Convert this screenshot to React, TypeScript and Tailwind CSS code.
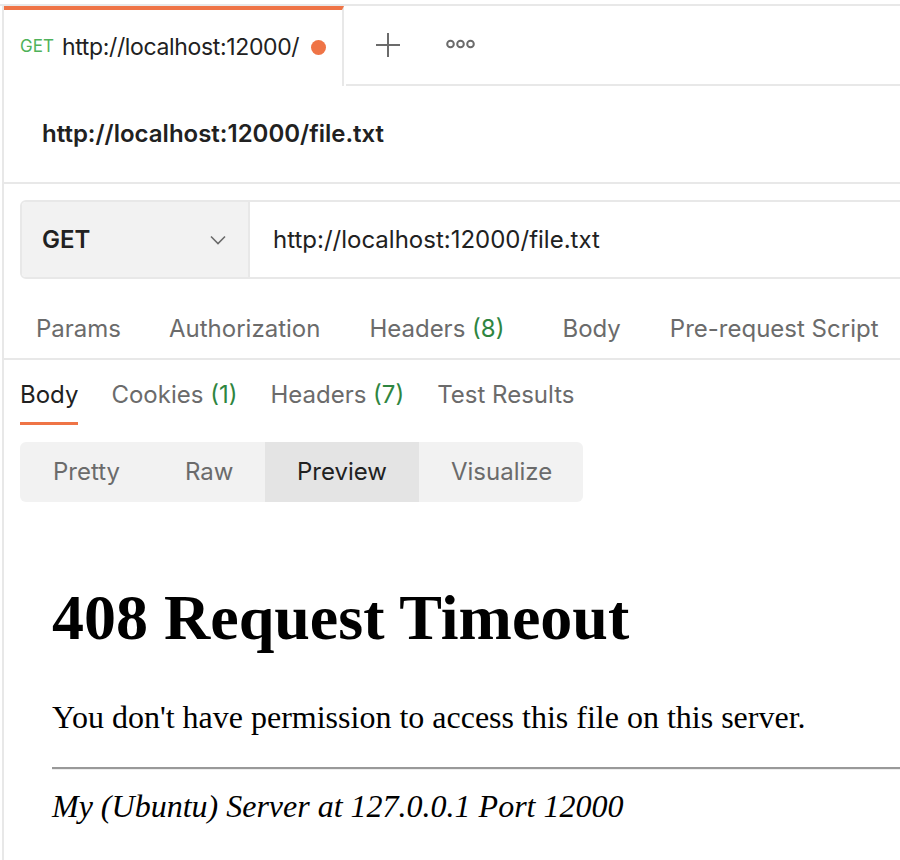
import React from "react";

const ui = { fontFamily: "Inter, 'Noto Sans', sans-serif" };
const serif = { fontFamily: "'Liberation Serif', 'Times New Roman', serif" };

export default function App() {
  return (
    <div className="w-[900px] h-[860px] bg-white overflow-hidden pt-[4px]" style={ui}>
      <div className="border-t-2 border-[#e8e8e8] h-full">
        <div className="ml-[2px] border-l-2 border-[#e8e8e8] h-full flex flex-col">
          {/* Tab bar */}
          <div className="flex h-[80px] shrink-0">
            <div className="w-[340px] border-t-[4px] border-[#ef7446] border-r-2 border-r-[#e8e8e8] flex items-center pl-[16px] pb-[2px]">
              <span className="text-[17px] text-[#4fb25a] mr-[8px]">GET</span>
              <span className="text-[23px] text-[#212121] tracking-[-0.35px]">http://localhost:12000/</span>
              <span className="ml-[12px] w-[15px] h-[15px] rounded-full bg-[#ef7446]"></span>
            </div>
            <div className="flex-1 ml-[2px] border-b-2 border-[#e8e8e8] flex items-center">
              <svg width="26" height="26" viewBox="0 0 26 26" className="ml-[29px] mb-[1px]">
                <path d="M13 1v24M1 13h24" stroke="#6b6b6b" strokeWidth="2" />
              </svg>
              <svg width="30" height="10" viewBox="0 0 30 10" className="ml-[45px] mb-[2px]">
                <circle cx="4.5" cy="5" r="3.3" fill="none" stroke="#6b6b6b" strokeWidth="2" />
                <circle cx="14.5" cy="5" r="3.3" fill="none" stroke="#6b6b6b" strokeWidth="2" />
                <circle cx="24.5" cy="5" r="3.3" fill="none" stroke="#6b6b6b" strokeWidth="2" />
              </svg>
            </div>
          </div>
          {/* Request name header */}
          <div className="h-[98px] shrink-0 border-b-2 border-[#e8e8e8] flex items-center pl-[38px]">
            <span className="text-[24px] font-semibold text-[#212121]">http://localhost:12000/file.txt</span>
          </div>
          {/* URL bar */}
          <div className="pl-[16px] pt-[16px] shrink-0">
            <div className="w-[1000px] h-[79px] border-2 border-[#e8e8e8] rounded-l-[6px] flex overflow-hidden">
              <div className="w-[228px] bg-[#f2f2f2] border-r-2 border-[#e8e8e8] flex items-center justify-between pl-[20px] pr-[22px]">
                <span className="text-[24px] font-semibold text-[#212121]">GET</span>
                <svg width="16" height="10" viewBox="0 0 16 10">
                  <path d="M1 1.5l7 7 7-7" fill="none" stroke="#6b6b6b" strokeWidth="1.6" />
                </svg>
              </div>
              <div className="flex items-center pl-[23px]">
                <span className="text-[24px] text-[#212121]">http://localhost:12000/file.txt</span>
              </div>
            </div>
          </div>
          {/* Request tabs */}
          <div className="h-[81px] shrink-0 border-b-2 border-[#e8e8e8] flex items-center pt-[21px] text-[24px] text-[#6b6b6b] whitespace-nowrap">
            <span className="ml-[32px]">Params</span>
            <span className="ml-[48px]">Authorization</span>
            <span className="ml-[49px]">Headers <span className="text-[#2e8540]">(8)</span></span>
            <span className="ml-[58px]">Body</span>
            <span className="ml-[49px]">Pre-request Script</span>
          </div>
          {/* Response tabs */}
          <div className="flex pl-[16px] pt-[21px] shrink-0 text-[24px] text-[#6b6b6b] gap-[33px]">
            <div className="border-b-[3px] border-[#ef7446] pb-[13px] text-[#212121] leading-[28px]">Body</div>
            <div className="pb-[13px] leading-[28px]">Cookies <span className="text-[#2e8540]">(1)</span></div>
            <div className="pb-[13px] leading-[28px]">Headers <span className="text-[#2e8540]">(7)</span></div>
            <div className="pb-[13px] leading-[28px]">Test Results</div>
          </div>
          {/* Segmented control */}
          <div className="pl-[16px] pt-[17px] shrink-0">
            <div className="inline-flex h-[60px] bg-[#f2f2f2] rounded-[6px] overflow-hidden text-[24px] text-[#6b6b6b]">
              <div className="w-[132px] pl-[33px] flex items-center">Pretty</div>
              <div className="w-[113px] pl-[33px] flex items-center">Raw</div>
              <div className="w-[154px] pl-[32px] flex items-center bg-[#e4e4e4] text-[#212121]">Preview</div>
              <div className="w-[164px] pl-[32px] flex items-center">Visualize</div>
            </div>
          </div>
          {/* Preview */}
          <div className="pl-[48px] pt-[80px]" style={serif}>
            <h1 className="text-[64px] font-bold leading-[72px] text-black">408 Request Timeout</h1>
            <p className="text-[32px] leading-[36px] mt-[45px] text-black">You don't have permission to access this file on this server.</p>
            <div className="mt-[32px] border-t-2 border-[#999999] border-b border-b-[#eeeeee]"></div>
            <p className="text-[32px] italic leading-[36px] mt-[18px] text-black">My (Ubuntu) Server at 127.0.0.1 Port 12000</p>
          </div>
        </div>
      </div>
    </div>
  );
}
